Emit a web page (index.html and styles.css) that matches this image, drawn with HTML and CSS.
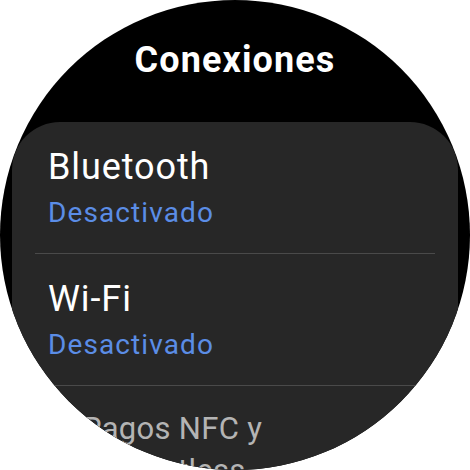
FILE: index.html
```html
<!DOCTYPE html>
<html lang="es">
<head>
<meta charset="utf-8">
<link rel="stylesheet" href="styles.css">
</head>
<body>
<div class="screen">
  <h1 class="title">Conexiones</h1>
  <div class="card">
    <div class="row">
      <div class="row-title">Bluetooth</div>
      <div class="row-sub">Desactivado</div>
    </div>
    <div class="sep"></div>
    <div class="row">
      <div class="row-title">Wi-Fi</div>
      <div class="row-sub">Desactivado</div>
    </div>
    <div class="sep"></div>
    <div class="row row-far">
      <div class="row-title">Pagos NFC y contactless</div>
    </div>
  </div>
</div>
</body>
</html>
```
FILE: styles.css
```css
html, body {
  margin: 0;
  padding: 0;
  background: #ffffff;
}
.screen {
  width: 470px;
  height: 470px;
  border-radius: 50%;
  overflow: hidden;
  background: #000000;
  font-family: Roboto, "Liberation Sans", sans-serif;
  color: #ffffff;
}
.title {
  margin: 0;
  padding-top: 43px;
  font-size: 36px;
  line-height: 35px;
  font-weight: 700;
  text-align: center;
  letter-spacing: 1.1px;
}
.card {
  margin: 44px 12px 0 12px;
  background: #272727;
  border-radius: 48px 48px 0 0;
  height: 400px;
}
.row {
  height: 131px;
  padding-left: 36px;
  box-sizing: border-box;
  padding-top: 27px;
}
.row-title {
  font-size: 36px;
  line-height: 36px;
  letter-spacing: 0.9px;
  white-space: nowrap;
}
.row-sub {
  margin-top: 14px;
  font-size: 28px;
  line-height: 28px;
  letter-spacing: 1.1px;
  color: #5b8de6;
}
.sep {
  height: 1px;
  margin: 0 23px;
  background: #4a4a4a;
}
.row-far {
  padding-left: 70px;
  padding-top: 22px;
}
.row-far .row-title {
  font-size: 31px;
  line-height: 42px;
  letter-spacing: 0.3px;
  color: #b4b4b4;
  white-space: normal;
  width: 220px;
}
```
